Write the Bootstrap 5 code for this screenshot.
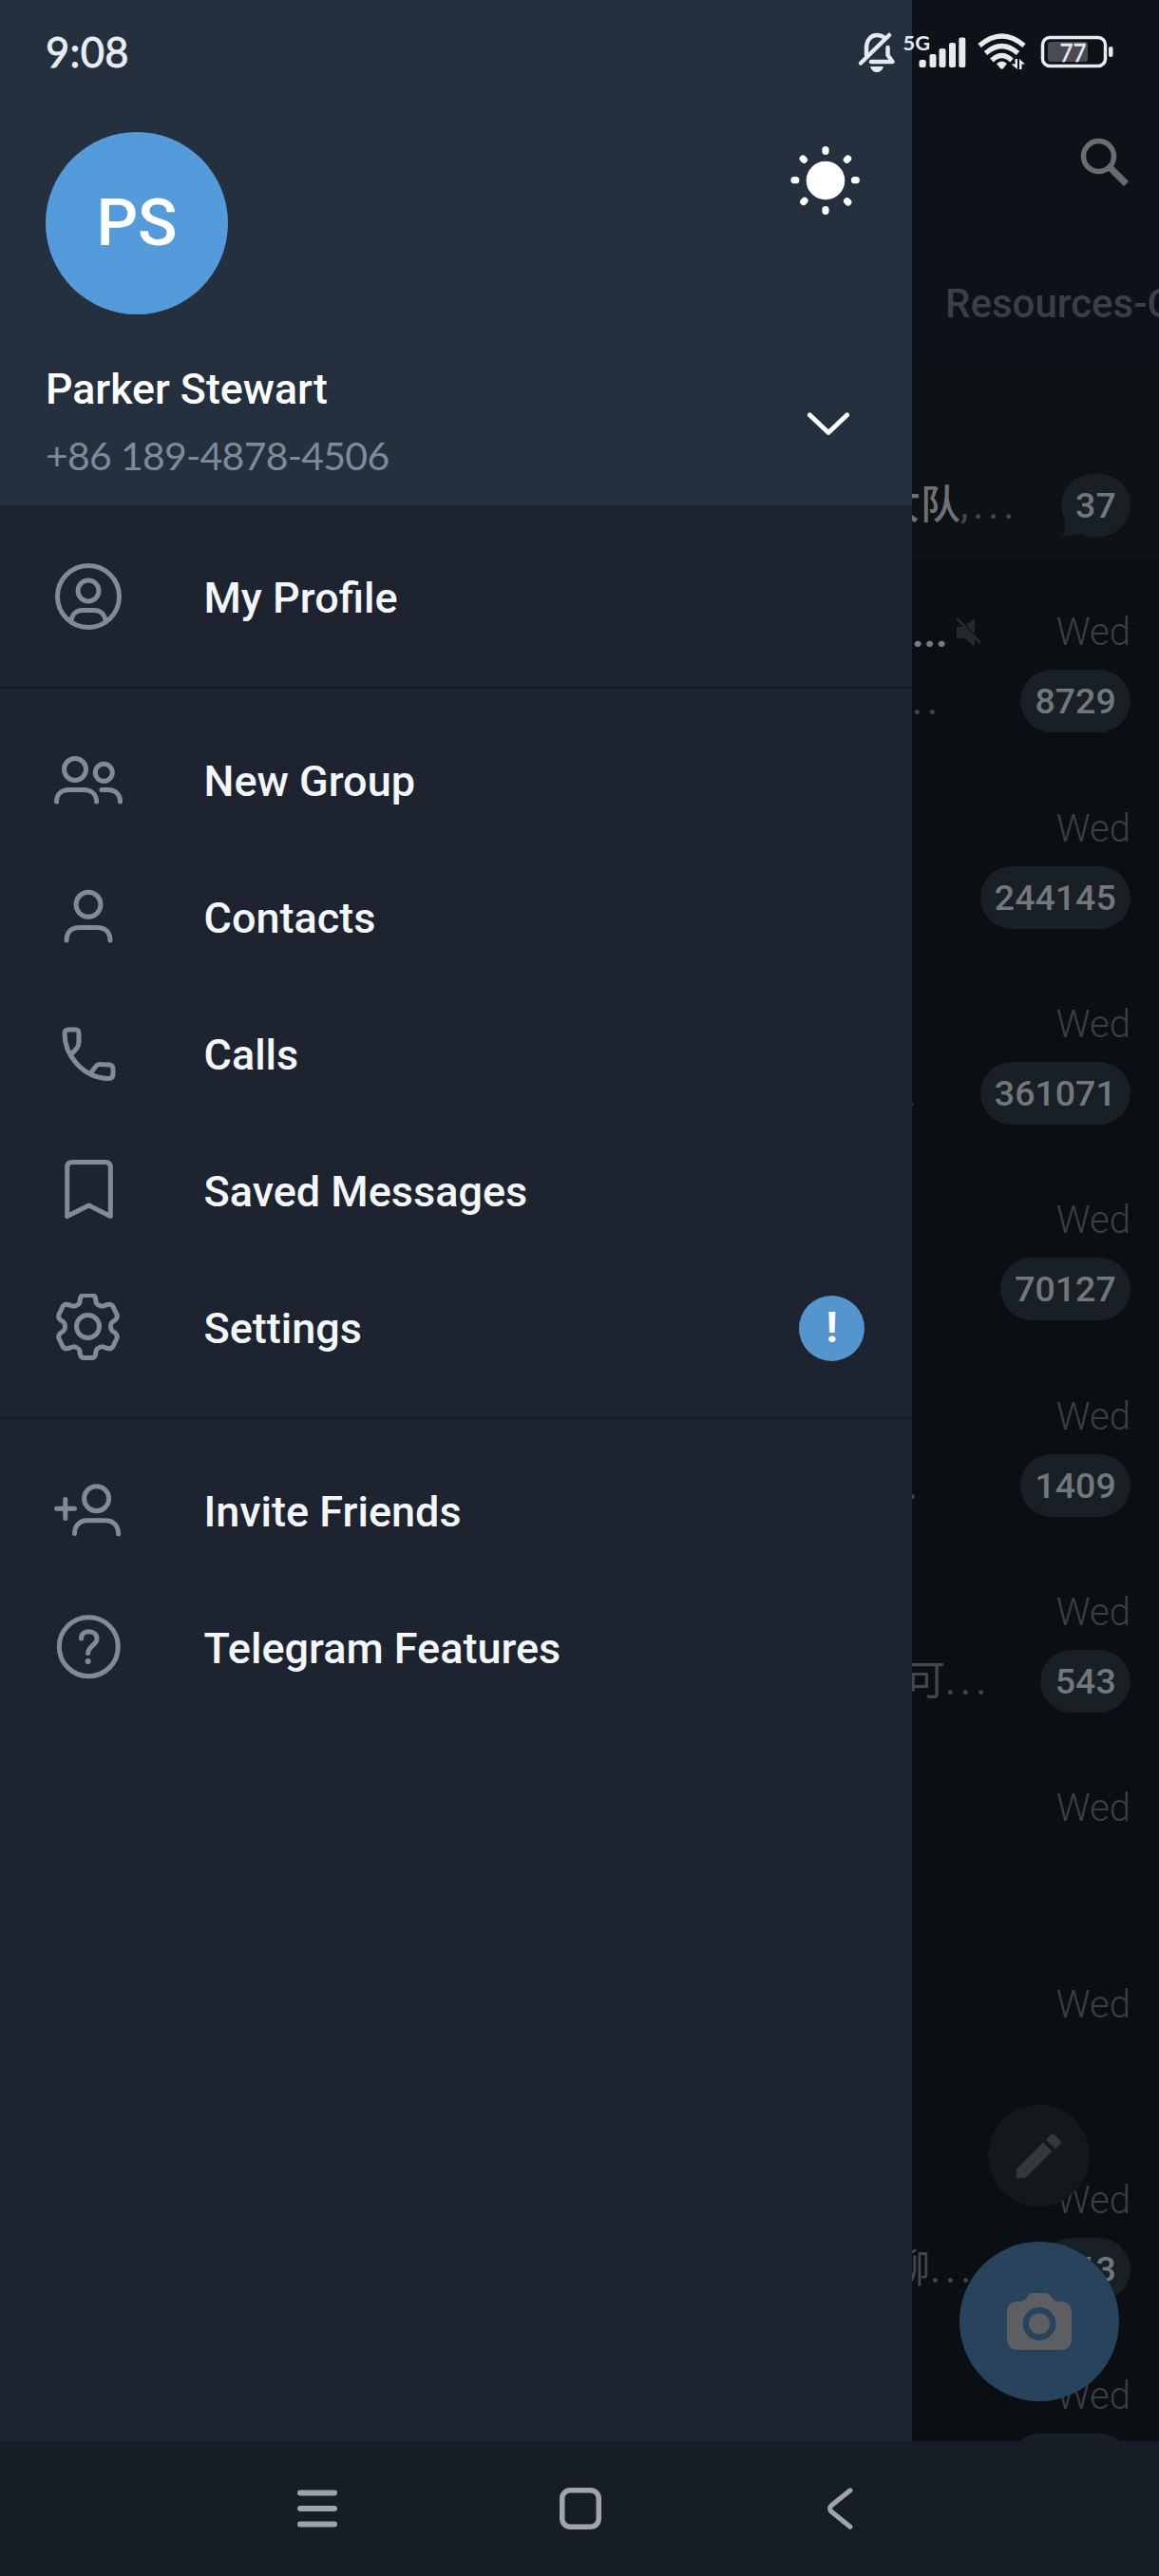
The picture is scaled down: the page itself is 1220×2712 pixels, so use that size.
<!DOCTYPE html>
<html lang="en">
<head>
<meta charset="utf-8">
<meta name="viewport" content="width=device-width, initial-scale=1">
<title>Telegram</title>
<link href="https://cdn.jsdelivr.net/npm/bootstrap@5.3.0/dist/css/bootstrap.min.css" rel="stylesheet">
<style>
  body { background: #0b0f13; font-family: Roboto, "Noto Sans CJK SC", sans-serif; color: #f3f7fa; }
  .phone { width: 1220px; height: 2712px; }
  svg { display: block; flex: none; }

  .statusbar { height: 110px; padding: 0 48px 0 48px; color: #e8edf3; z-index: 5; }
  .clock { font-family: Lato, sans-serif; font-size: 43.5px; line-height: 50px; padding-top: 29px; letter-spacing: .3px; -webkit-text-stroke: .8px #e8edf3; }
  .status-icons { font-family: Lato, sans-serif; }

  .drawer { width: 960px; background: #1e242f; flex: none; }
  .drawer-head { height: 532px; background: #24303e; padding: 139px 48px 0 48px; }
  .avatar { width: 192px; height: 192px; background: #549bdc; font-size: 68.5px; font-weight: 500; color: #fff; }
  .sun { margin: 13px 5px 0 0; }
  .who { margin-top: 53px; }
  .person { font-size: 44.7px; font-weight: 500; line-height: 52px; color: #fff; }
  .tel { font-family: Lato, sans-serif; font-size: 41px; line-height: 50px; color: #7d8b99; margin-top: 19px; letter-spacing: -.73px; }
  .chev { margin: 26px 18px 0 0; }

  .menu { padding: 25px 0 22px; }
  .menu + .menu { border-top: 2px solid #141923; }
  .menu a { height: 144px; padding: 0 50px 0 57px; color: #f3f7fa; font-size: 45px; font-weight: 500; }
  .menu a > span { padding-top: 2px; }
  .menu svg { fill: none; stroke: #7f8b95; stroke-width: 5; stroke-linecap: round; stroke-linejoin: round; margin-right: 83.5px; }
  .menu .alert-dot { width: 69px; height: 69px; padding: 0; background: #5595cd; color: #fff; font-weight: 700; font-size: 45px; }

  .chats { background: #0b0f13; min-width: 0; }
  .toolbar-area { height: 385px; background: #0d1118; padding: 141px 30px 0 35px; }
  .folder { font-size: 42px; font-weight: 500; line-height: 50px; color: #3a3e46; margin-top: 98px; white-space: nowrap; }
  .chat-row { height: 206.35px; padding: 52px 30px 0 0; border-bottom: 2px solid #090c10; }
  .chat-row:first-of-type { background: #0e1215; }
  .line-a { height: 46px; }
  .line-b { height: 66px; margin-top: 16px; }
  .day { font-size: 40px; font-weight: 300; line-height: 46px; color: #3b3f43; }
  .pill { height: 66px; padding: 0 15.3px; background: #182026; color: #72777b; font-size: 37.5px; font-weight: 500; border-radius: 33px; }
  .frag { font-size: 42px; line-height: 60px; white-space: nowrap; color: #44484c; }
  .frag b { font-weight: 500; color: #6e7173; }
  .dots { letter-spacing: 5px; }
  .bold-dots { font-size: 43px; line-height: 46px; font-weight: 700; color: #7a7d80; }
  .f1 { margin-left: -33px; } .f2 { margin-left: 0; } .f4 { margin-left: -7px; } .f6 { margin-left: -5px; }
  .f7 { margin-left: -7px; } .f10 { margin-left: -23px; }

  .fab-camera { width: 168px; height: 168px; right: 42px; bottom: 42px; background: #28435c; }
  .fab-edit { width: 107px; height: 107px; right: 73px; bottom: 247px; background: #14181d; }
  .navbar-sys { height: 142px; background: #161d26; padding: 0 322px 0 313px; }
</style>
</head>
<body>
<div class="phone d-flex flex-column position-relative overflow-hidden">

  <header class="statusbar position-absolute top-0 start-0 w-100 d-flex justify-content-between">
    <div class="clock">9:08</div>
    <svg class="status-icons" width="270" height="60" viewBox="903 25 270 60" style="margin:25px 0 0 0" fill="#e8ebee">
      <g fill="none" stroke="#e4eaf0" stroke-width="4.5" stroke-linecap="round" stroke-linejoin="round">
        <path d="M913 58V51C913 42 918 37 924 37Q929 37 932 40"/>
        <path d="M907 66.500L937 37"/>
        <path d="M935.500 50V58L940.500 65H918"/>
      </g>
      <path d="M917 70H931Q929 76 924 76T917 70Z"/>
      <text x="951.500" y="53" font-size="21.500" font-weight="700" textLength="28.500" lengthAdjust="spacingAndGlyphs">5G</text>
      <rect x="968.500" y="63" width="7.200" height="8" rx="2"/><rect x="979.500" y="57" width="7" height="14" rx="2"/><rect x="989.500" y="51" width="7" height="20" rx="2"/><rect x="1000" y="45" width="7" height="26" rx="2"/><rect x="1010.300" y="39.500" width="7" height="31.500" rx="2"/>
      <g fill="none" stroke="#e8ebee" stroke-width="5.200">
        <path d="M1032 48Q1055.500 28 1079 48"/><path d="M1038.500 56Q1055.500 41 1072.500 56"/><path d="M1045 63.500Q1055.500 53.500 1066 63.500"/>
      </g>
      <path d="M1050 67Q1055.500 62 1061 67L1057 72Q1055.500 73.500 1054 72Z"/>
      <path d="M1069.500 62H1072V73L1065.500 67.500H1069.500ZM1074 73V62L1080 67.500H1076.500V73Z"/>
      <rect x="1098.500" y="39.500" width="66" height="30" rx="7.500" fill="none" stroke="#e8ebf0" stroke-width="3.500"/>
      <rect x="1104" y="44" width="42" height="21" rx="3" fill="#4a4b53"/>
      <rect x="1168" y="49" width="4.500" height="11" rx="2"/>
      <text x="1116.500" y="64.500" font-size="27.500" font-weight="400" textLength="28" lengthAdjust="spacingAndGlyphs" stroke="#e8ebee" stroke-width=".5">77</text>
    </svg>
  </header>

  <main class="d-flex flex-grow-1 overflow-hidden">
    <aside class="drawer">
      <div class="drawer-head">
        <div class="d-flex justify-content-between align-items-start">
          <div class="avatar rounded-circle d-flex align-items-center justify-content-center">PS</div>
          <svg class="sun" width="76" height="76" viewBox="-38 -38 76 76" fill="#fff" stroke="#fff" stroke-width="7.200" stroke-linecap="round">
            <circle r="16.700"/>
            <path d="M0-32.500v1.800M0 30.500v1.800M-33-.3h1.800M30.500-.3h1.800M-23.800-23l1.200 1.200M22.400-21.800l1.200-1.200M-23.200 22.500l1.200-1.200M22.600 21.700l1.200 1.200"/>
          </svg>
        </div>
        <div class="who d-flex justify-content-between align-items-start">
          <div>
            <div class="person">Parker Stewart</div>
            <div class="tel">+86 189-4878-4506</div>
          </div>
          <svg class="chev" width="46" height="72" viewBox="0 0 46 72" fill="none" stroke="#fff" stroke-width="5" stroke-linecap="round" stroke-linejoin="round"><path d="M4.500 27L24 45.500L43.500 27"/></svg>
        </div>
      </div>

      <nav class="menu d-flex flex-column">
        <a href="#" class="d-flex align-items-center text-decoration-none">
          <svg width="74" height="72" viewBox="0 0 74 72"><circle cx="36" cy="35" r="32.500"/><circle cx="36" cy="29" r="11"/><path d="M18 60C19 53.500 23.500 49.500 30 49.500H42C48.500 49.500 53 53.500 54 60"/></svg>
          <span>My Profile</span>
        </a>
      </nav>
      <nav class="menu d-flex flex-column">
        <a href="#" class="d-flex align-items-center text-decoration-none">
          <svg width="74" height="72" viewBox="0 0 74 72"><circle cx="22" cy="24" r="11.500"/><circle cx="52.300" cy="27.300" r="9"/><path d="M2.500 58C2.500 50 8 45.500 15.500 45.500H31C39 45.500 44.600 50 44.600 58M50 45.500H57C64 45.500 69.500 50 69.500 58"/></svg>
          <span>New Group</span>
        </a>
        <a href="#" class="d-flex align-items-center text-decoration-none">
          <svg width="74" height="72" viewBox="0 0 74 72"><circle cx="36" cy="22.300" r="13"/><path d="M13 60C13 51 18.500 46.500 27 46.500H45C53.500 46.500 59 51 59 60"/></svg>
          <span>Contacts</span>
        </a>
        <a href="#" class="d-flex align-items-center text-decoration-none">
          <svg width="74" height="72" viewBox="0 0 74 72"><path d="M11 14Q11 10 15 10H22.500Q26 10 26 14V23Q26 27 23.500 30L18.500 35.500M11 14C11 37 30 60.500 57 61.500Q62 61.500 62 57V51.500Q62 47.500 58 47L49 46.500Q46 46 44 48.500L38.500 55.500"/></svg>
          <span>Calls</span>
        </a>
        <a href="#" class="d-flex align-items-center text-decoration-none">
          <svg width="74" height="72" viewBox="0 0 74 72"><path d="M13.700 62.500V11Q13.700 5.500 19.200 5.500H53.800Q59.300 5.500 59.300 11V62.500L36.500 51Z"/></svg>
          <span>Saved Messages</span>
        </a>
        <a href="#" class="d-flex align-items-center text-decoration-none">
          <svg width="74" height="72" viewBox="0 0 74 72"><circle cx="35.500" cy="34.500" r="12"/><path d="M27 8.500L27.300 5.500Q28 1.500 31.500 1.500H39.500Q43 1.500 43.700 5.500L44 8.500Q44.300 11 47 12Q49.500 13.800 52 12.800L56 11.500Q60 10.500 62 13.500L65.800 21.500Q67.300 25 64.500 27.500L61 30Q59.500 31.500 59.500 34.500Q59.500 37.500 61 39L64.500 41.500Q67.300 44 65.800 47.500L62 55.500Q60 58.500 56 57.500L52 56.200Q49.500 55.200 47 57Q44.300 58 44 60.500L43.700 63.500Q43 67.500 39.500 67.500H31.500Q28 67.500 27.300 63.500L27 60.500Q26.700 58 24 57Q21.500 55.200 19 56.200L15 57.500Q11 58.500 9 55.500L5.200 47.500Q3.700 44 6.500 41.500L10 39Q11.500 37.500 11.500 34.500Q11.500 31.500 10 30L6.500 27.500Q3.700 25 5.200 21.500L9 13.500Q11 10.500 15 11.500L19 12.800Q21.500 13.800 24 12Q26.700 11 27 8.500Z"/></svg>
          <span>Settings</span>
          <span class="alert-dot rounded-circle d-flex align-items-center justify-content-center ms-auto">!</span>
        </a>
      </nav>
      <nav class="menu d-flex flex-column">
        <a href="#" class="d-flex align-items-center text-decoration-none">
          <svg width="74" height="72" viewBox="0 0 74 72"><circle cx="44.600" cy="22.700" r="13"/><path d="M21.500 59.500C21.500 51 27 45.800 35 45.800H54C62 45.800 67.600 51 67.600 60M2.500 33.300H21.500M11.800 23.500V43.500"/></svg>
          <span>Invite Friends</span>
        </a>
        <a href="#" class="d-flex align-items-center text-decoration-none">
          <svg width="74" height="72" viewBox="0 0 74 72"><circle cx="36.300" cy="34.700" r="31"/><path d="M28.500 26C28.500 21 32 18.800 36.500 18.800C41.500 18.800 45 22 45 26.500C45 32.500 36 34 35.600 41.500"/><circle cx="35.600" cy="50" r="3" fill="#7f8b95" stroke="none"/></svg>
          <span>Telegram Features</span>
        </a>
      </nav>
    </aside>

    <section class="chats flex-grow-1 position-relative overflow-hidden">
      <div class="toolbar-area">
        <div class="d-flex justify-content-end">
          <svg width="56" height="56" viewBox="1134 141 56 56" fill="none" stroke="#6a6c6e" stroke-width="5.500"><circle cx="1156.500" cy="164.500" r="16"/><path d="M1168 176L1185.500 193.500" stroke-width="7"/></svg>
        </div>
        <div class="folder">Resources-C</div>
      </div>

      <article class="chat-row">
        <div class="line-a"></div>
        <div class="line-b d-flex align-items-center justify-content-between">
          <div class="frag f1"><b>女队</b><span class="dots">,...</span></div>
          <div class="position-relative">
            <svg class="position-absolute bottom-0 start-0" width="26" height="26" viewBox="0 0 26 26" fill="#182026"><path d="M4 0V17Q4 22 0 25Q12 26 22 22Z"/></svg>
            <span class="pill d-flex align-items-center position-relative">37</span>
          </div>
        </div>
      </article>
      <article class="chat-row">
        <div class="line-a d-flex align-items-center">
          <span class="bold-dots">...</span>
          <svg width="30" height="32" viewBox="0 0 30 32" fill="#24292d" style="margin-left:9px"><path d="M1 10H8L20 22V31L9 22H1ZM11 8L20 1V17Z"/><path d="M1 1L26 27" stroke="#24292d" stroke-width="3"/></svg>
          <span class="day ms-auto">Wed</span>
        </div>
        <div class="line-b d-flex align-items-center justify-content-between">
          <div class="frag dots f2">..</div>
          <span class="pill d-flex align-items-center">8729</span>
        </div>
      </article>
      <article class="chat-row">
        <div class="line-a d-flex justify-content-end"><span class="day">Wed</span></div>
        <div class="line-b d-flex justify-content-end"><span class="pill d-flex align-items-center">244145</span></div>
      </article>
      <article class="chat-row">
        <div class="line-a d-flex justify-content-end"><span class="day">Wed</span></div>
        <div class="line-b d-flex align-items-center justify-content-between">
          <div class="frag f4">.</div>
          <span class="pill d-flex align-items-center">361071</span>
        </div>
      </article>
      <article class="chat-row">
        <div class="line-a d-flex justify-content-end"><span class="day">Wed</span></div>
        <div class="line-b d-flex justify-content-end"><span class="pill d-flex align-items-center">70127</span></div>
      </article>
      <article class="chat-row">
        <div class="line-a d-flex justify-content-end"><span class="day">Wed</span></div>
        <div class="line-b d-flex align-items-center justify-content-between">
          <div class="frag f6">.</div>
          <span class="pill d-flex align-items-center">1409</span>
        </div>
      </article>
      <article class="chat-row">
        <div class="line-a d-flex justify-content-end"><span class="day">Wed</span></div>
        <div class="line-b d-flex align-items-center justify-content-between">
          <div class="frag f7">可<span class="dots">...</span></div>
          <span class="pill d-flex align-items-center">543</span>
        </div>
      </article>
      <article class="chat-row">
        <div class="line-a d-flex justify-content-end"><span class="day">Wed</span></div>
      </article>
      <article class="chat-row">
        <div class="line-a d-flex justify-content-end"><span class="day">Wed</span></div>
      </article>
      <article class="chat-row">
        <div class="line-a d-flex justify-content-end"><span class="day">Wed</span></div>
        <div class="line-b d-flex align-items-center justify-content-between">
          <div class="frag f10">聊<span class="dots">...</span></div>
          <span class="pill d-flex align-items-center">563</span>
        </div>
      </article>
      <article class="chat-row">
        <div class="line-a d-flex justify-content-end"><span class="day">Wed</span></div>
        <div class="line-b d-flex justify-content-end"><span class="pill" style="width:128px"></span></div>
      </article>

      <div class="fab-edit position-absolute rounded-circle d-flex align-items-center justify-content-center">
        <svg width="48" height="48" viewBox="0 0 48 48" fill="#34373b"><path d="M0 37.500L28 9.500L37.500 19L9.500 47H0ZM31 6.500L36 1.500Q38 0 40 1.500L46.500 8Q47.500 9.500 46.500 11L41 16.500Z"/></svg>
      </div>
      <div class="fab-camera position-absolute rounded-circle d-flex align-items-center justify-content-center">
        <svg width="68" height="60" viewBox="0 0 68 60"><path d="M12 9H15Q18 9 20 6L22.500 2.500Q24 0 27 0H41Q44 0 45.500 2.500L48 6Q50 9 53 9H56Q68 9 68 21V48Q68 60 56 60H12Q0 60 0 48V21Q0 9 12 9Z" fill="#5d5e62"/><circle cx="34" cy="32.500" r="14.200" fill="#5d5e62" stroke="#28435c" stroke-width="6.400"/></svg>
      </div>
    </section>
  </main>

  <footer class="navbar-sys d-flex justify-content-between align-items-center flex-shrink-0">
    <svg width="42" height="44" viewBox="0 0 42 44" stroke="#9da3ab" stroke-width="6" stroke-linecap="round"><path d="M3 5.500H39M3 22H39M3 38.500H39"/></svg>
    <svg class="me-1" width="44" height="44" viewBox="0 0 44 44" fill="none" stroke="#9fa5aa" stroke-width="5.500"><rect x="2.750" y="2.750" width="38.500" height="38.500" rx="8.500"/></svg>
    <svg width="28" height="44" viewBox="0 0 28 44" fill="none" stroke="#9fa5aa" stroke-width="5" stroke-linecap="round"><path d="M25 2.800L5.500 18.500Q1.500 22 5.500 25.500L25 41.200"/></svg>
  </footer>
</div>
<script src="https://cdn.jsdelivr.net/npm/bootstrap@5.3.0/dist/js/bootstrap.bundle.min.js"></script>
</body>
</html>
